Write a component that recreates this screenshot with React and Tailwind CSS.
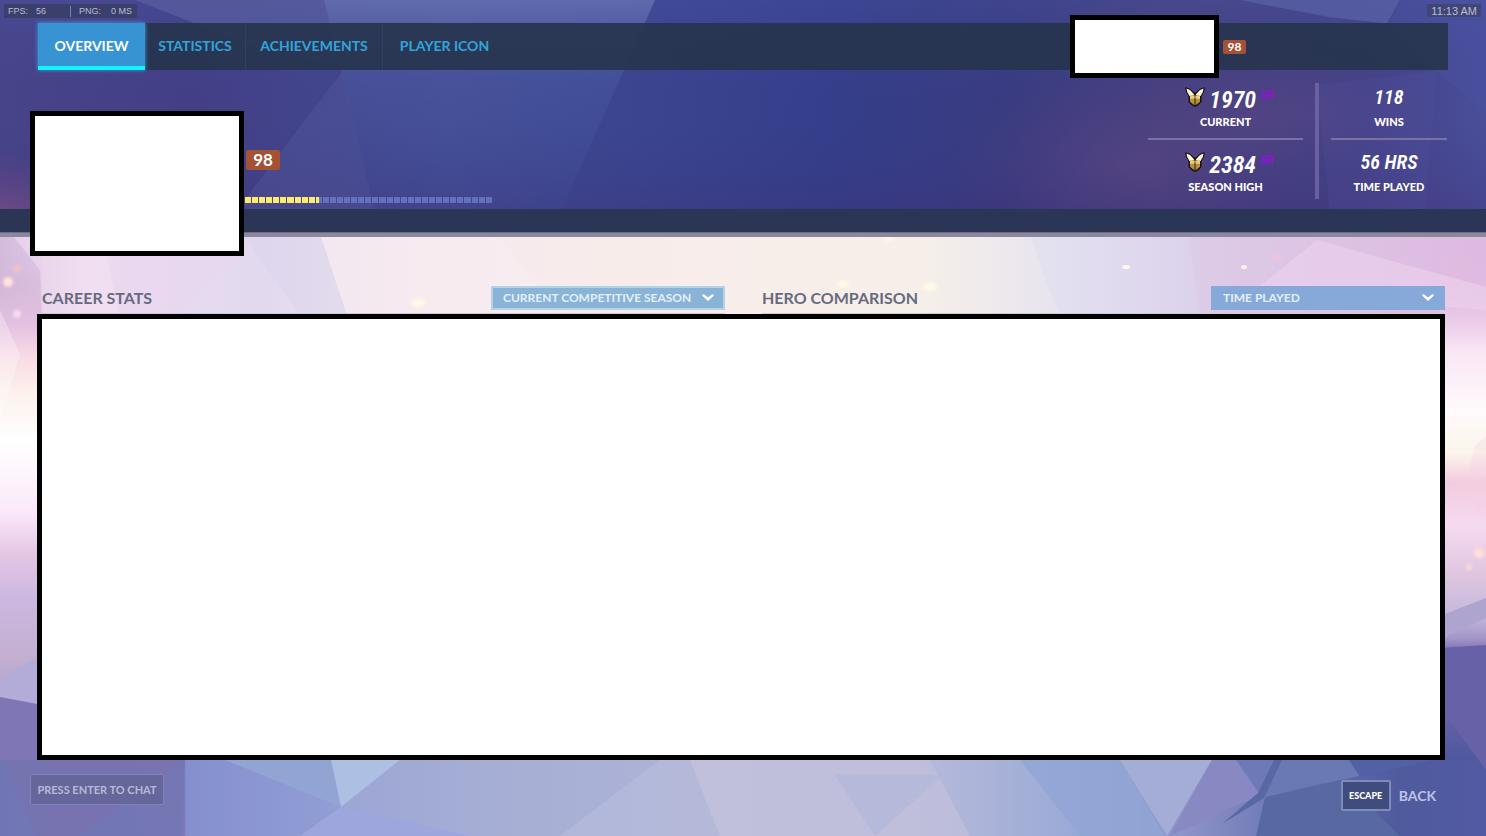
import React, { useState } from 'react';
import clsx from 'clsx';

const TABS = [
  { id: 'overview', label: 'OVERVIEW', width: 'w-[107px]' },
  { id: 'statistics', label: 'STATISTICS', width: 'w-[101px]' },
  { id: 'achievements', label: 'ACHIEVEMENTS', width: 'w-[137px]' },
  { id: 'player-icon', label: 'PLAYER ICON', width: 'w-[123px]' },
];

const SEGMENTS = 35;
const PROGRESS = 10.6;

// Faceted sky behind the lower part of the page
const PageBackdrop = () => (
  <svg
    className="absolute inset-0 w-full h-full"
    viewBox="0 0 1486 836"
    preserveAspectRatio="none"
    aria-hidden="true"
  >
    <defs>
      <linearGradient id="sky" x1="0" x2="1" y1="0" y2="0">
        <stop offset="0" stopColor="#d2bbdd" />
        <stop offset="0.06" stopColor="#ecdcf1" />
        <stop offset="0.18" stopColor="#e2d9ef" />
        <stop offset="0.28" stopColor="#f4e8ef" />
        <stop offset="0.42" stopColor="#f8ecea" />
        <stop offset="0.62" stopColor="#f6efe9" />
        <stop offset="0.72" stopColor="#e6e3ef" />
        <stop offset="0.81" stopColor="#dccbe7" />
        <stop offset="1" stopColor="#deb9e0" />
      </linearGradient>
      <linearGradient id="left" gradientUnits="userSpaceOnUse" x1="0" x2="0" y1="237" y2="836">
        <stop offset="0" stopColor="#d2bbdd" stopOpacity="0" />
        <stop offset="0.08" stopColor="#d6b3d3" stopOpacity="0.5" />
        <stop offset="0.15" stopColor="#e4c2e2" />
        <stop offset="0.2" stopColor="#f9dbe5" />
        <stop offset="0.26" stopColor="#fcf1ec" />
        <stop offset="0.34" stopColor="#ffffff" />
        <stop offset="0.46" stopColor="#fbe8fa" />
        <stop offset="0.53" stopColor="#e4c6e3" />
        <stop offset="0.6" stopColor="#cdb8e2" />
        <stop offset="0.7" stopColor="#c3afd0" />
        <stop offset="0.8" stopColor="#a7a1d0" />
        <stop offset="1" stopColor="#7078b8" />
      </linearGradient>
      <linearGradient id="right" gradientUnits="userSpaceOnUse" x1="0" x2="0" y1="237" y2="836">
        <stop offset="0" stopColor="#deb9e0" stopOpacity="0" />
        <stop offset="0.1" stopColor="#e6bfe2" stopOpacity="0.6" />
        <stop offset="0.19" stopColor="#f9e6f5" />
        <stop offset="0.29" stopColor="#fffafc" />
        <stop offset="0.36" stopColor="#fcf5ec" />
        <stop offset="0.41" stopColor="#f2cbe0" />
        <stop offset="0.48" stopColor="#f6daf0" />
        <stop offset="0.56" stopColor="#e0c6e0" />
        <stop offset="0.63" stopColor="#c6b8dc" />
        <stop offset="0.67" stopColor="#a396c8" />
        <stop offset="0.7" stopColor="#6860a8" />
        <stop offset="0.8" stopColor="#6561a8" />
        <stop offset="0.87" stopColor="#4f589e" />
        <stop offset="1" stopColor="#5059a2" />
      </linearGradient>
      <linearGradient id="ground" x1="0" x2="1" y1="0" y2="0">
        <stop offset="0" stopColor="#7176b6" />
        <stop offset="0.124" stopColor="#7a78b5" />
        <stop offset="0.125" stopColor="#858fcf" />
        <stop offset="0.22" stopColor="#909dd4" />
        <stop offset="0.32" stopColor="#a8b0d6" />
        <stop offset="0.46" stopColor="#bebfdb" />
        <stop offset="0.62" stopColor="#b7badb" />
        <stop offset="0.74" stopColor="#95a7d5" />
        <stop offset="0.8" stopColor="#8c92c8" />
        <stop offset="0.87" stopColor="#6774b1" />
        <stop offset="0.94" stopColor="#4f5b9d" />
        <stop offset="1" stopColor="#525aa3" />
      </linearGradient>
      <filter id="glow" x="-100%" y="-100%" width="300%" height="300%">
        <feGaussianBlur stdDeviation="1.5" />
      </filter>
    </defs>

    <rect width="1486" height="420" fill="url(#sky)" />
    <rect y="420" width="1486" height="416" fill="url(#ground)" />
    <rect y="237" width="42" height="523" fill="url(#left)" />
    <rect x="1440" y="237" width="46" height="523" fill="url(#right)" />

    {/* upper facets */}
    <polygon points="14,237 105,237 120,320 42,320 40,270" fill="#f6e2f2" fillOpacity="0.5" />
    <polygon points="105,250 235,256 175,320 120,320" fill="#ead6ee" fillOpacity="0.5" />
    <polygon points="244,237 321,237 347,315 300,315" fill="#d5d0ec" fillOpacity="0.35" />
    <polygon points="321,237 500,237 560,315 347,315" fill="#f8ecf0" fillOpacity="0.6" />
    <polygon points="1031,237 1188,237 1200,315 1060,315 1045,280" fill="#dcdaf2" fillOpacity="0.4" />
    <polygon points="1317,240 1486,287 1486,310 1255,290" fill="#ecd2ee" fillOpacity="0.6" />
    <g filter="url(#glow)">
      <ellipse cx="8" cy="282" rx="5" ry="5" fill="#ffe4dc" />
      <ellipse cx="17" cy="269" rx="4" ry="4" fill="#f0bfc8" />
      <ellipse cx="17" cy="314" rx="4" ry="4" fill="#f6dcee" />
      <ellipse cx="418" cy="303" rx="7" ry="4" fill="#fffae4" />
      <ellipse cx="889" cy="239" rx="6" ry="2" fill="#fff9e2" />
      <ellipse cx="843" cy="284" rx="6" ry="3" fill="#fffbe2" />
      <ellipse cx="930" cy="287" rx="7" ry="4" fill="#fffbe2" />
      <ellipse cx="1479" cy="553" rx="5" ry="5" fill="#ffdfd6" />
      <ellipse cx="1469" cy="567" rx="3" ry="3" fill="#fbd9da" />
      <ellipse cx="1277" cy="257" rx="6" ry="3" fill="#edc5dc" />
    </g>
    <ellipse cx="1126" cy="267" rx="4" ry="2" fill="#fff6ea" />
    <ellipse cx="1244" cy="267" rx="3" ry="2" fill="#fff0e6" />

    {/* side facets */}
    <polygon points="0,310 20,354 8,395 0,420" fill="#fff" fillOpacity="0.3" />
    <polygon points="0,678 37,658 37,704 0,697" fill="#b3abd8" />
    <polygon points="0,697 37,704 42,760 0,760" fill="#7f76b5" />
    <polygon points="1445,476 1467,479 1475,446 1486,436 1486,520" fill="#f6cfe0" fillOpacity="0.3" />
    <polygon points="1445,614 1486,598 1486,618 1445,637" fill="#ada4cf" />
    <polygon points="1440,648 1486,645 1486,770 1475,755 1445,714" fill="#6762a8" />

    {/* lower facets */}
    <polygon points="0,760 185,760 181,836 0,836" fill="#7076b4" fillOpacity="0.5" />
    <polygon points="3,760 185,760 80,836 37,836" fill="#7c70ae" fillOpacity="0.5" />
    <polygon points="225,760 331,760 341,807" fill="#92a4d4" />
    <polygon points="331,760 400,760 341,807" fill="#adc0e3" />
    <polygon points="400,760 660,760 560,836 470,836 341,807" fill="#a3acd4" fillOpacity="0.6" />
    <polygon points="341,807 470,836 300,836" fill="#9ea7dd" />
    <polygon points="660,760 690,760 720,836 560,836" fill="#b2b8da" fillOpacity="0.8" />
    <polygon points="690,760 930,760 970,836 720,836" fill="#c2c1dc" fillOpacity="0.7" />
    <polygon points="834,774 943,775 875,836" fill="#aeb6da" fillOpacity="0.5" />
    <polygon points="1020,760 1120,760 1165,836 1080,836" fill="#91a5d4" fillOpacity="0.8" />
    <polygon points="1120,760 1212,760 1167,836" fill="#a4add6" />
    <polygon points="1212,760 1236,760 1260,795 1170,836" fill="#8888c2" />
    <polygon points="1236,760 1280,760 1260,794" fill="#6e7ab8" />
    <polygon points="1282,760 1349,760 1365,775 1265,795" fill="#6a78b4" />
    <polygon points="1349,760 1445,757 1360,777" fill="#5261a4" />
    <polygon points="1265,797 1343,780 1400,836 1256,836" fill="#5769a0" />
    <polygon points="1274,760 1282,760 1264,798 1222,824 1258,793" fill="#5868a4" />
  </svg>
);

// Darker slice of the same sky, used behind the player header
const HeaderBackdrop = () => (
  <svg
    className="absolute inset-0 w-full h-full"
    viewBox="0 0 1486 232"
    preserveAspectRatio="none"
    aria-hidden="true"
  >
    <defs>
      <linearGradient id="night" x1="0" x2="1" y1="0" y2="0">
        <stop offset="0" stopColor="#484489" />
        <stop offset="0.13" stopColor="#433f86" />
        <stop offset="0.3" stopColor="#414a92" />
        <stop offset="0.42" stopColor="#3b4590" />
        <stop offset="0.56" stopColor="#343e8a" />
        <stop offset="0.68" stopColor="#393b80" />
        <stop offset="0.78" stopColor="#46407f" />
        <stop offset="0.92" stopColor="#444186" />
        <stop offset="1" stopColor="#4a4e9a" />
      </linearGradient>
      <linearGradient id="dusk" x1="0" x2="0" y1="0" y2="1">
        <stop offset="0" stopColor="#4a55a4" stopOpacity="0.35" />
        <stop offset="0.5" stopColor="#3a3c88" stopOpacity="0" />
        <stop offset="1" stopColor="#41296e" stopOpacity="0.4" />
      </linearGradient>
      <linearGradient id="beam" x1="0" x2="0" y1="0" y2="1">
        <stop offset="0" stopColor="#7c8ac2" stopOpacity="0.5" />
        <stop offset="0.35" stopColor="#5668b0" stopOpacity="0.3" />
        <stop offset="1" stopColor="#4458a4" stopOpacity="0.12" />
      </linearGradient>
      <radialGradient id="ember">
        <stop offset="0" stopColor="#7b4f88" stopOpacity="0.7" />
        <stop offset="1" stopColor="#6a4880" stopOpacity="0" />
      </radialGradient>
    </defs>
    <rect width="1486" height="232" fill="url(#night)" />
    <rect width="1486" height="232" fill="url(#dusk)" />
    <ellipse cx="0" cy="205" rx="130" ry="55" fill="url(#ember)" />
    <ellipse cx="1130" cy="160" rx="180" ry="90" fill="url(#ember)" fillOpacity="0.4" />
    <ellipse cx="1280" cy="110" rx="150" ry="60" fill="url(#ember)" fillOpacity="0.3" />
    <polygon points="135,0 324,0 340,66 250,44" fill="#7078ae" fillOpacity="0.35" />
    <polygon points="324,0 655,0 560,209 375,209" fill="url(#beam)" />
    <polygon points="342,70 375,209 245,209 245,195" fill="#5b5fa2" fillOpacity="0.3" />
    <polygon points="1240,0 1400,0 1387,23 1330,17" fill="#6a78ba" fillOpacity="0.4" />
    <polygon points="1400,0 1486,0 1486,110 1437,70 1390,23" fill="#4c59ad" fillOpacity="0.25" />
    <polygon points="1317,83 1437,70 1425,209 1330,209" fill="#5757a5" fillOpacity="0.2" />
  </svg>
);

const RankIcon = () => (
  <svg width="20" height="20" viewBox="0 0 20 20" className="shrink-0" aria-hidden="true">
    <path
      d="M.7.8L5 2.200 9 6h2l4-3.800L19.300.8 18.500 5 16 9v6l-3 3.200-3 1.200-3-1.200L4 15V9L1.500 5z"
      fill="#211a1c"
      stroke="#120e14"
    />
    <path d="M1.500 1.500L5 3l4.200 4.500L7 9H4.500L2.200 5z" fill="#fff6d6" />
    <path d="M18.500 1.500L15 3l-4.200 4.500L13 9h2.500l2.300-4z" fill="#fff6d6" />
    <path d="M5 8.500h4.500v9L7.500 17 5 14.500z" fill="#b98f3c" />
    <path d="M15 8.500h-4.500v9l2-.5 2.500-2.500z" fill="#b98f3c" />
    <path d="M5 8.500h4.500v3L5 12zM15 8.500h-4.500v3l4.500.5z" fill="#e9cd78" />
    <path d="M7 16.500l2 .5h2l2-.5-1.500 1.700h-3z" fill="#6d4d22" />
  </svg>
);

const Rating = ({ value, label }) => (
  <>
    <div className="h-8 pl-2 flex justify-center gap-1 font-['Roboto_Condensed',sans-serif] font-semibold italic">
      <div className="pt-1">
        <RankIcon />
      </div>
      <span className="text-[24px] leading-[34px]">{value}</span>
      <span className="text-[13px] leading-6 text-[#9013d6]">SR</span>
    </div>
    <div className="text-[11px] leading-[14px] font-black text-center">{label}</div>
  </>
);

const Total = ({ value, label }) => (
  <>
    <div className="h-8 text-center font-['Roboto_Condensed',sans-serif] font-semibold italic text-[20px] leading-7">
      {value}
    </div>
    <div className="text-[11px] leading-[14px] font-black text-center">{label}</div>
  </>
);

const PanelSelect = ({ id, label, options, className }) => (
  <div className="relative w-[234px]">
    <label htmlFor={id} className="sr-only">{label}</label>
    <select
      id={id}
      className={clsx(
        'appearance-none block w-full h-6 border-2 pl-[10px] pr-6 text-xs font-bold text-[#e2effa] focus:outline-none',
        className
      )}
    >
      {options.map((option) => (
        <option key={option}>{option}</option>
      ))}
    </select>
    <svg
      className="absolute right-[11px] top-2 pointer-events-none"
      width="12"
      height="8"
      viewBox="0 0 12 8"
      aria-hidden="true"
    >
      <path d="M0 1.500L1.500 0 6 3.500 10.500 0 12 1.500 6 7z" fill="#fff" />
    </svg>
  </div>
);

const App = () => {
  const [activeTab, setActiveTab] = useState('overview');

  return (
    <div className="relative min-h-screen flex flex-col overflow-hidden font-['Lato',sans-serif] text-white">
      <PageBackdrop />

      <header className="relative">
        <HeaderBackdrop />

        {/* Debug readout and clock */}
        <div className="relative h-[23px] pt-1 pl-1 pr-[5px] flex justify-between items-start font-['Liberation_Sans',sans-serif] text-[#b9bdd2]">
          <div className="h-[14px] w-[133px] pl-1 pr-[5px] flex items-center bg-[#3b3f6c] text-[9px] leading-[14px]">
            <span className="w-7">FPS:</span>
            <span className="flex-1">56</span>
            <span className="w-px h-[11px] mr-2 bg-[#7c80a6]" />
            <span className="w-8">PNG:</span>
            <span>0 MS</span>
          </div>
          <div className="h-[13px] px-1 bg-[#424677] text-[11px] leading-[14px]">11:13 AM</div>
        </div>

        {/* Navigation */}
        <div className="relative h-[47px] mx-[38px] flex items-center bg-[#26344c]/90">
          <nav className="h-full flex">
            {TABS.map((tab) => (
              <button
                key={tab.id}
                onClick={() => setActiveTab(tab.id)}
                className={clsx(
                  'h-full text-[14px] leading-5 font-bold whitespace-nowrap',
                  tab.width,
                  activeTab === tab.id
                    ? 'bg-[#3893d3] border-b-4 border-[#12f4fd] pt-0.5 text-white shadow-[0_0_4px_#3fa4e4]'
                    : 'border-r border-[#35415c] last:border-r-0 pb-0.5 text-[#30a5dc]'
                )}
              >
                {tab.label}
              </button>
            ))}
          </nav>
          <div className="ml-auto mr-[229px] w-[149px] h-[63px] shrink-0 border-[5px] border-black bg-white" />
          <div className="-ml-[225px] mr-[202px] w-[23px] h-[14px] shrink-0 rounded-xs bg-[#a35234] text-center text-xs leading-[14px] font-bold">
            98
          </div>
        </div>

        {/* Player card, level and rating */}
        <div className="relative h-[139px] pl-[30px] pr-[39px] flex">
          <div className="relative z-10 mt-[41px] w-[214px] h-[145px] shrink-0 border-[5px] border-black bg-white" />
          <div className="pt-20 pl-px">
            <div className="ml-px w-[34px] h-5 rounded-xs bg-[#a35234] text-center text-[17px] leading-5 font-bold">
              98
            </div>
            <div className="mt-[27px] w-[247px] h-[6px] flex gap-px">
              {Array.from({ length: SEGMENTS }, (_, i) => (
                <div key={i} className="flex-1 bg-[#6370bb]">
                  <div
                    className="h-full bg-[#fdec6c]"
                    style={{ width: `${Math.min(Math.max(PROGRESS - i, 0), 1) * 100}%` }}
                  />
                </div>
              ))}
            </div>
          </div>

          <div className="ml-auto pt-[13px] flex items-start gap-3">
            <div className="w-[155px]">
              <div className="pb-[9px] border-b-2 border-[#7d70a4]">
                <Rating value="1970" label="CURRENT" />
              </div>
              <div className="pt-2">
                <Rating value="2384" label="SEASON HIGH" />
              </div>
            </div>
            <div className="w-1 h-[116px] bg-[#6a619c]" />
            <div className="w-[116px]">
              <div className="pb-[9px] border-b-2 border-[#7d70a4]">
                <Total value="118" label="WINS" />
              </div>
              <div className="pt-2">
                <Total value="56 HRS" label="TIME PLAYED" />
              </div>
            </div>
          </div>
        </div>

        <div className="relative h-[23px] bg-[#2b3556]" />
        <div className="relative h-[5px] bg-[#8b879d] border-t border-[#6d6b86]" />
      </header>

      {/* Panels */}
      <main className="relative flex-1 flex flex-col pt-[49px] pl-[37px] pr-[41px]">
        <div className="h-7 pl-[5px] grid grid-cols-2 gap-[37px]">
          <div className="flex justify-between items-start border-b border-[#d3c7d6]">
            <h2 className="text-base leading-6 font-bold text-[#676a80]">CAREER STATS</h2>
            <PanelSelect
              id="season"
              label="Season"
              options={['CURRENT COMPETITIVE SEASON', 'QUICK PLAY']}
              className="bg-[#8ab4d7] border-[#b4d2e8]"
            />
          </div>
          <div className="flex justify-between items-start border-b border-[#d3c7d6]">
            <h2 className="text-base leading-6 font-bold text-[#676a80]">HERO COMPARISON</h2>
            <PanelSelect
              id="comparison"
              label="Compare heroes by"
              options={['TIME PLAYED', 'GAMES WON']}
              className="bg-[#86a9d9] border-[#86a9d9]"
            />
          </div>
        </div>
        <div className="flex-1 min-h-64 border-[5px] border-black bg-white" />
      </main>

      <footer className="relative h-[76px] pl-[30px] pr-[50px] flex justify-between items-start">
        <button className="mt-[14px] w-[134px] h-[31px] rounded-xs border border-[#8482b8] bg-[#65679b] text-[11px] leading-4 font-bold text-[#b9b7d8]">
          PRESS ENTER TO CHAT
        </button>
        <button className="mt-5 flex items-center gap-2 text-[14px] leading-5 font-bold text-[#bcc4e6]">
          <kbd className="w-[50px] h-[31px] rounded-xs border-2 border-[#7e8bba] bg-[#404c7e] font-['Lato',sans-serif] text-[9px] leading-[27px] font-black text-white text-center">
            ESCAPE
          </kbd>
          BACK
        </button>
      </footer>
    </div>
  );
};

export default App;
